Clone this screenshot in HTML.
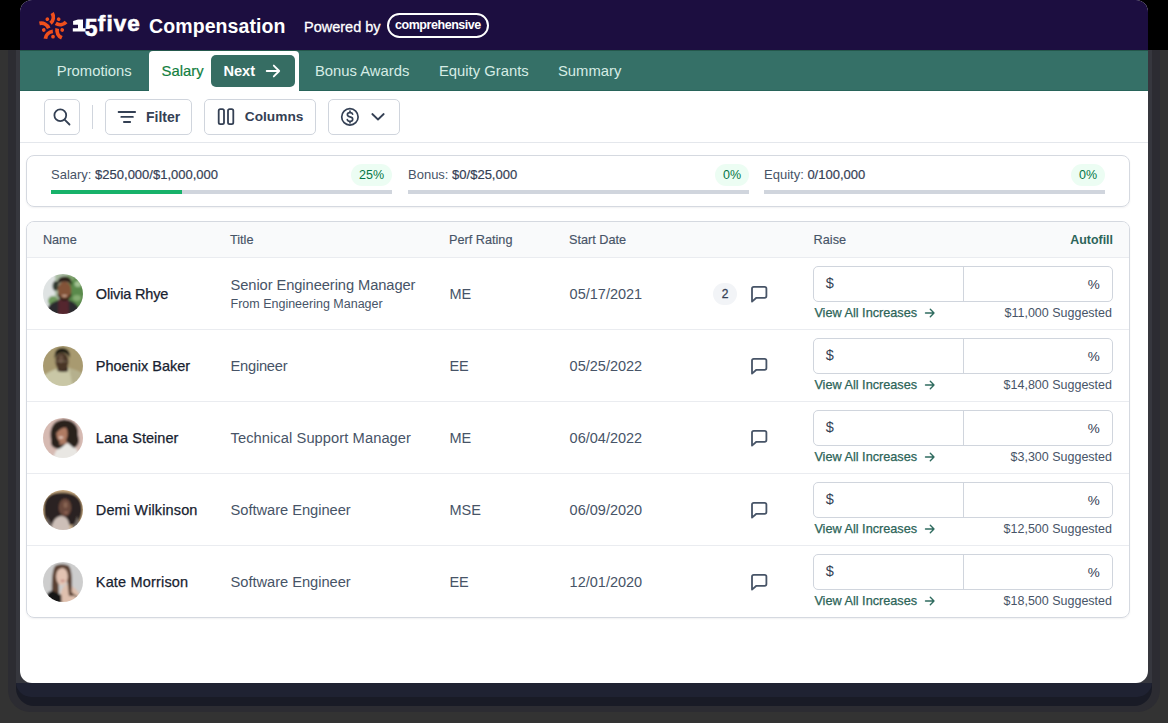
<!DOCTYPE html><html><head><meta charset="utf-8"><style>
*{margin:0;padding:0;box-sizing:border-box}
html,body{width:1168px;height:723px;overflow:hidden;background:#000}
body{position:relative;font-family:"Liberation Sans",sans-serif}
.t{position:absolute;line-height:1;white-space:nowrap}
.abs{position:absolute}
#noise{position:absolute;left:0;top:50px;width:1168px;height:673px;background:#333333}
#sh1{position:absolute;left:8px;top:50px;width:1152px;height:662px;background:#2c2c32;border-radius:0 0 22px 22px}
#sh2{position:absolute;left:16px;top:50px;width:1136px;height:656px;background:#191b26;border-radius:0 0 18px 18px}
#sh3{position:absolute;left:16px;top:50px;width:1136px;height:647px;background:#1f2232;border-radius:0 0 15px 15px}
#sh4{position:absolute;left:16px;top:50px;width:1136px;height:633px;background:#36373e}
#card{position:absolute;left:20px;top:0;width:1128px;height:683px;background:#fff;border-radius:12px;overflow:hidden}
#hdr{position:absolute;left:0;top:0;width:1128px;height:50px;background:#1c0e40}
#tabs{position:absolute;left:0;top:50px;width:1128px;height:41px;background:#357067;border-top:1px solid #24584c;border-bottom:1px solid #28645a}
.tab{color:#d6ece5}
#active{position:absolute;left:129px;top:51px;width:150px;height:40px;background:#fff;border-radius:4px 4px 0 0}
#next{position:absolute;left:191px;top:55px;width:84px;height:32px;background:#366d63;border-radius:5px}
.btn{position:absolute;top:99px;height:36px;border:1px solid #d0d5dd;border-radius:5px;background:#fff}
.bt{color:#344054;font-weight:700}
#tbar{position:absolute;left:0;top:142px;width:1128px;height:1px;background:#e4e7ec}
.sumcard{position:absolute;left:6px;top:155px;width:1104px;height:52px;border:1px solid #d5d9e0;border-radius:8px;box-shadow:0 1px 2px rgba(16,24,40,.06)}
.lbl{color:#475467}
.val{color:#344054;-webkit-text-stroke:0.2px #344054}
.bar{position:absolute;top:190px;height:4px;background:#d0d5dd}
.fill{position:absolute;left:0;top:0;height:4px;background:#17b26a}
.pct{position:absolute;top:164px;height:22px;border-radius:11px;background:#ecfdf3}
.pt{color:#067647}
#tbl{position:absolute;left:6px;top:221px;width:1104px;height:397px;border:1px solid #d5d9e0;border-radius:8px;box-shadow:0 1px 2px rgba(16,24,40,.06);overflow:hidden}
#thead{position:absolute;left:0;top:0;width:1102px;height:36px;background:#f9fafb;border-bottom:1px solid #eaecf0}
.sep{position:absolute;left:7px;width:1102px;height:1px;background:#eaecf0}
.th{color:#475467;-webkit-text-stroke:0.15px #475467}
.nm{color:#182230;-webkit-text-stroke:0.25px #182230}
.ti{color:#475467}
.av{position:absolute;left:23px;width:40px;height:40px;border-radius:50%;overflow:hidden}
.av svg{display:block}
.cm{position:absolute;left:729px}
.bdg{position:absolute;left:693px;width:24px;height:22px;border-radius:11px;background:#f2f4f7}
.inp{position:absolute;left:793px;width:300px;height:36px;border:1px solid #d0d5dd;border-radius:5px}
.isep{position:absolute;left:149px;top:0;width:1px;height:34px;background:#d0d5dd}
.it{color:#344054}
.via{color:#2c6458;-webkit-text-stroke:0.25px #2c6458}
.sug{color:#475467}
</style></head><body>
<div id="noise"></div><div id="sh1"></div><div id="sh2"></div><div id="sh3"></div><div id="sh4"></div>
<svg width="0" height="0" style="position:absolute"><defs><filter id="bl" x="-10%" y="-10%" width="120%" height="120%"><feGaussianBlur stdDeviation="0.85"/></filter></defs></svg>
<div id="card">
<div id="hdr"></div><div id="tabs"></div>
<svg class="abs" style="left:19.1px;top:12.6px;overflow:visible" width="28" height="28" viewBox="-14 -14 28 28">
<defs><path id="arc" d="M-0.8 -14 A8.2 8.2 0 0 1 -2.5 -3.7" fill="none" stroke="#f04f1c" stroke-width="3.8"/></defs>
<use href="#arc"/><use href="#arc" transform="rotate(72)"/><use href="#arc" transform="rotate(144)"/><use href="#arc" transform="rotate(216)"/><use href="#arc" transform="rotate(288)"/>
<g fill="#f04f1c"><circle cx="0" cy="-9.7" r="1.85" transform="rotate(36)"/><circle cx="0" cy="-9.7" r="1.85" transform="rotate(108)"/><circle cx="0" cy="-9.7" r="1.85" transform="rotate(180)"/><circle cx="0" cy="-9.7" r="1.85" transform="rotate(252)"/><circle cx="0" cy="-9.7" r="1.85" transform="rotate(324)"/></g></svg>
<svg class="abs" style="left:0;top:0" width="70" height="40"><path d="M53.1 21.1 L58 19.4 H63 V28.3 H65.5 V31.6 H52.8 V28.3 H58 V24.7 H53.1 Z" fill="#fff"/></svg>
<div class="t " style="left:64.8px;top:16.93px;font-size:23px;color:#fff;font-weight:700;-webkit-text-stroke:0.5px #fff">5</div>
<div class="t " style="left:77.8px;top:13.25px;font-size:22.5px;color:#fff;font-weight:700;letter-spacing:1.1px;-webkit-text-stroke:0.6px #fff">f<span>ive</span></div>
<div class="t " style="left:129px;top:16.69px;font-size:19.5px;color:#fff;font-weight:700;letter-spacing:0.1px">Compensation</div>
<div class="t " style="left:284px;top:19.83px;font-size:14.5px;color:#fff;-webkit-text-stroke:0.3px #fff">Powered by</div>
<div class="abs" style="left:367px;top:13px;width:102px;height:25px;border:2px solid #fff;border-radius:13px"></div>
<div class="t " style="left:375px;top:19.22px;font-size:12.5px;color:#fff;font-weight:700;letter-spacing:-0.45px">comprehensive</div>
<div class="t tab" style="left:36.8px;top:64.47px;font-size:14.8px;">Promotions</div>
<div id="active"></div><div id="next"></div>
<div class="t " style="left:141.6px;top:64.47px;font-size:14.8px;color:#13803f;-webkit-text-stroke:0.2px #13803f">Salary</div>
<div class="t " style="left:203.4px;top:63.64px;font-size:14.6px;color:#fff;font-weight:700">Next</div>
<svg class="abs" style="left:244px;top:63px" width="18" height="16" viewBox="0 0 18 16"><path d="M2.7 8 H15.2 M9.8 2.6 L15.2 8 L9.8 13.4" fill="none" stroke="#fff" stroke-width="1.85" stroke-linecap="round" stroke-linejoin="round"/></svg>
<div class="t tab" style="left:295px;top:64.47px;font-size:14.8px;">Bonus Awards</div>
<div class="t tab" style="left:419px;top:64.47px;font-size:14.8px;">Equity Grants</div>
<div class="t tab" style="left:538px;top:64.47px;font-size:14.8px;">Summary</div>
<div class="btn" style="left:24px;width:36px"></div>
<svg class="abs" style="left:30px;top:105px" width="24" height="24" viewBox="0 0 24 24"><circle cx="10.3" cy="10.3" r="5.9" fill="none" stroke="#344054" stroke-width="1.8"/><path d="M14.6 14.6 L19.5 19.5" stroke="#344054" stroke-width="1.8" stroke-linecap="round"/></svg>
<div class="abs" style="left:72px;top:105px;width:1px;height:24px;background:#d0d5dd"></div>
<div class="btn" style="left:85px;width:87px"></div>
<svg class="abs" style="left:96px;top:105px" width="20" height="20" viewBox="0 0 20 20"><path d="M2.6 7 H19.2 M5.3 11.9 H16.9 M7.9 17 H14.2" stroke="#344054" stroke-width="1.8" stroke-linecap="round"/></svg>
<div class="t bt" style="left:126px;top:110.05px;font-size:14px;">Filter</div>
<div class="btn" style="left:184px;width:112px"></div>
<svg class="abs" style="left:196px;top:106px" width="20" height="22" viewBox="0 0 20 22"><rect x="2.7" y="3.2" width="5.3" height="15" rx="1.6" fill="none" stroke="#344054" stroke-width="1.8"/><rect x="12" y="3.2" width="5.3" height="15" rx="1.6" fill="none" stroke="#344054" stroke-width="1.8"/></svg>
<div class="t bt" style="left:224.8px;top:110.20px;font-size:13.7px;">Columns</div>
<div class="btn" style="left:308px;width:72px"></div>
<svg class="abs" style="left:318px;top:105px" width="24" height="24" viewBox="0 0 24 24"><circle cx="11.9" cy="11.9" r="8.2" fill="none" stroke="#344054" stroke-width="1.7"/><path d="M14.6 9.2 Q14.3 7.6 12 7.6 Q9.4 7.6 9.4 9.6 Q9.4 11.4 12 11.8 Q14.7 12.2 14.7 14.2 Q14.7 16.3 12 16.3 Q9.6 16.3 9.3 14.6 M12 6.1 V7.6 M12 16.3 V17.8" fill="none" stroke="#344054" stroke-width="1.7" stroke-linecap="round"/></svg>
<svg class="abs" style="left:350px;top:111px" width="16" height="12" viewBox="0 0 16 12"><path d="M2.3 3 L8 8.5 L13.7 3" fill="none" stroke="#344054" stroke-width="1.8" stroke-linecap="round" stroke-linejoin="round"/></svg>
<div id="tbar"></div>
<div class="sumcard"></div>
<div class="t " style="left:31px;top:168.00px;font-size:13px;"><span class="lbl">Salary:</span> <span class="val">$250,000/$1,000,000</span></div>
<div class="bar" style="left:31px;width:341px"><div class="fill" style="width:131px"></div></div>
<div class="pct" style="left:331px;width:41px"></div>
<div class="t pt" style="left:331px;top:169.32px;font-size:12.5px;width:41px;text-align:center">25%</div>
<div class="t " style="left:388px;top:168.00px;font-size:13px;"><span class="lbl">Bonus:</span> <span class="val">$0/$25,000</span></div>
<div class="bar" style="left:388px;width:341px"><div class="fill" style="width:0px"></div></div>
<div class="pct" style="left:695px;width:34px"></div>
<div class="t pt" style="left:695px;top:169.32px;font-size:12.5px;width:34px;text-align:center">0%</div>
<div class="t " style="left:744px;top:168.00px;font-size:13px;"><span class="lbl">Equity:</span> <span class="val">0/100,000</span></div>
<div class="bar" style="left:744px;width:341px"><div class="fill" style="width:0px"></div></div>
<div class="pct" style="left:1051px;width:34px"></div>
<div class="t pt" style="left:1051px;top:169.32px;font-size:12.5px;width:34px;text-align:center">0%</div>
<div id="tbl"><div id="thead"></div></div>
<div class="t th" style="left:22.9px;top:234.15px;font-size:12.7px;">Name</div>
<div class="t th" style="left:210px;top:234.15px;font-size:12.7px;">Title</div>
<div class="t th" style="left:429px;top:234.15px;font-size:12.7px;">Perf Rating</div>
<div class="t th" style="left:549px;top:234.15px;font-size:12.7px;">Start Date</div>
<div class="t th" style="left:793.6px;top:234.15px;font-size:12.7px;">Raise</div>
<div class="t " style="right:35px;top:233.60px;font-size:12.4px;color:#2c6459;font-weight:700">Autofill</div>
<div class="av" style="top:274px"><svg width="40" height="40" viewBox="0 0 40 40"><g filter="url(#bl)"><rect x="-2" y="-2" width="44" height="44" fill="#a9bca2"/>
   <rect x="-2" y="-2" width="14" height="44" fill="#dfe3e3"/>
   <ellipse cx="33" cy="18" rx="9" ry="17" fill="#5a8a4b"/><ellipse cx="35" cy="10" rx="3.5" ry="3" fill="#a3c393"/><ellipse cx="34" cy="24" rx="4" ry="3" fill="#86ad72"/>
   <ellipse cx="10" cy="27" rx="5" ry="5" fill="#6e9a5b"/><ellipse cx="12.5" cy="12" rx="3" ry="5" fill="#323a31"/><ellipse cx="27" cy="4" rx="5" ry="3" fill="#7ea26c"/>
   <path d="M2 42 Q4 29 14 26.5 L27 26.5 Q36 29 38 42Z" fill="#2a2a2e"/>
   <path d="M15.5 25 L25.5 25 L26 42 L15 42Z" fill="#55272d"/>
   <ellipse cx="21.5" cy="16.5" rx="6.8" ry="9.3" fill="#835339"/>
   <path d="M14 12 Q13.5 2.5 21.5 2.5 Q29.5 2.5 29 12 Q27 7.5 21.5 7.5 Q16 7.5 14 12Z" fill="#2b1e18"/>
   <path d="M14.7 19 Q21.5 30 28.3 19 L28.3 22 Q21.5 32 14.7 22Z" fill="#2e1f19"/>
   <ellipse cx="21.5" cy="21.8" rx="2.6" ry="1" fill="#c9a793"/></g></svg></div>
<div class="t nm" style="left:75.8px;top:286.83px;font-size:14.5px;letter-spacing:-0.15px">Olivia Rhye</div>
<div class="t ti" style="left:210.5px;top:277.56px;font-size:14.7px;letter-spacing:-0.08px">Senior Engineering Manager</div>
<div class="t ti" style="left:210.5px;top:298.42px;font-size:12.5px;">From Engineering Manager</div>
<div class="t ti" style="left:429.4px;top:287.33px;font-size:14.5px;">ME</div>
<div class="t ti" style="left:549.6px;top:287.33px;font-size:14.5px;">05/17/2021</div>
<div class="bdg" style="top:283px"></div>
<div class="t it" style="left:693px;top:288.34px;font-size:12px;width:24px;text-align:center;-webkit-text-stroke:0.3px #344054">2</div>
<svg class="cm" style="top:284px" width="20" height="20" viewBox="0 0 20 20"><path d="M3 17.6 V4.6 Q3 2.8 4.8 2.8 H15.6 Q17.4 2.8 17.4 4.6 V12 Q17.4 13.8 15.6 13.8 H7.4 Z" fill="none" stroke="#475467" stroke-width="1.8" stroke-linejoin="round"/></svg>
<div class="inp" style="top:266px"><div class="isep"></div></div>
<div class="t it" style="left:805.8px;top:276.43px;font-size:14.5px;">$</div>
<div class="t it" style="right:48.299999999999955px;top:277.77px;font-size:13.5px;">%</div>
<div class="t via" style="left:794.4px;top:306.55px;font-size:12.7px;">View All Increases</div>
<svg class="abs" style="left:904px;top:307px" width="12" height="12" viewBox="0 0 12 12"><path d="M1.5 6 H10 M6.3 2.3 L10 6 L6.3 9.7" fill="none" stroke="#2f6b5f" stroke-width="1.4" stroke-linecap="round" stroke-linejoin="round"/></svg>
<div class="t sug" style="right:36px;top:306.72px;font-size:12.5px;">$11,000 Suggested</div>
<div class="sep" style="top:329px"></div>
<div class="av" style="top:346px"><svg width="40" height="40" viewBox="0 0 40 40"><g filter="url(#bl)"><rect x="-2" y="-2" width="44" height="44" fill="#a89a70"/>
   <path d="M-2 42 L0 30 Q8 24 15 22.5 L26 22 Q33 24 40 28 L42 42Z" fill="#c9c7a6"/>
   <path d="M26 22 Q33 24 40 28 L42 42 L30 42Z" fill="#b5b08d"/>
   <path d="M14.5 21 L25 21 L25 25.3 Q20 27 14.5 25Z" fill="#3a2a20"/>
   <ellipse cx="19" cy="15.5" rx="6.6" ry="8.7" fill="#4a3528"/>
   <ellipse cx="18" cy="13" rx="2.5" ry="4" fill="#6a5243"/>
   <path d="M11.5 13 Q11 2 19 2 Q27.5 2 27 12 Q24 6.5 19 6.5 Q14 6.5 11.5 13Z" fill="#161210"/>
   <path d="M11 15.3 H24" stroke="#8f8670" stroke-width="0.6"/></g></svg></div>
<div class="t nm" style="left:75.8px;top:358.83px;font-size:14.5px;letter-spacing:0px">Phoenix Baker</div>
<div class="t ti" style="left:210.5px;top:359.16px;font-size:14.7px;letter-spacing:-0.25px">Engineer</div>
<div class="t ti" style="left:429.4px;top:359.33px;font-size:14.5px;">EE</div>
<div class="t ti" style="left:549.6px;top:359.33px;font-size:14.5px;">05/25/2022</div>
<svg class="cm" style="top:356px" width="20" height="20" viewBox="0 0 20 20"><path d="M3 17.6 V4.6 Q3 2.8 4.8 2.8 H15.6 Q17.4 2.8 17.4 4.6 V12 Q17.4 13.8 15.6 13.8 H7.4 Z" fill="none" stroke="#475467" stroke-width="1.8" stroke-linejoin="round"/></svg>
<div class="inp" style="top:338px"><div class="isep"></div></div>
<div class="t it" style="left:805.8px;top:348.43px;font-size:14.5px;">$</div>
<div class="t it" style="right:48.299999999999955px;top:349.77px;font-size:13.5px;">%</div>
<div class="t via" style="left:794.4px;top:378.55px;font-size:12.7px;">View All Increases</div>
<svg class="abs" style="left:904px;top:379px" width="12" height="12" viewBox="0 0 12 12"><path d="M1.5 6 H10 M6.3 2.3 L10 6 L6.3 9.7" fill="none" stroke="#2f6b5f" stroke-width="1.4" stroke-linecap="round" stroke-linejoin="round"/></svg>
<div class="t sug" style="right:36px;top:378.72px;font-size:12.5px;">$14,800 Suggested</div>
<div class="sep" style="top:401px"></div>
<div class="av" style="top:418px"><svg width="40" height="40" viewBox="0 0 40 40"><g filter="url(#bl)"><rect x="-2" y="-2" width="44" height="44" fill="#d6bab2"/>
   <path d="M10 42 Q12 28 24 25.5 Q34 25 37 42Z" fill="#e9e7e3"/>
   <path d="M8 22 Q5 3 21 1.5 Q36 2.5 35 17 Q38 27 31 30 Q26 26 24 24 Q19 30 15 31 Q7 30 8 22Z" fill="#2b201b"/>
   <path d="M16.5 22 L23.5 22 L23.5 26 L16.5 27Z" fill="#a87660"/>
   <ellipse cx="19" cy="15.5" rx="5.6" ry="8.8" fill="#b07c64"/>
   <path d="M12.5 11 Q16 4 26 7 L26 10 Q19 8 13.5 15Z" fill="#2b201b"/>
   <ellipse cx="18" cy="19.5" rx="2.3" ry="0.9" fill="#ecd7cc"/></g></svg></div>
<div class="t nm" style="left:75.8px;top:430.83px;font-size:14.5px;letter-spacing:0.03px">Lana Steiner</div>
<div class="t ti" style="left:210.5px;top:431.16px;font-size:14.7px;letter-spacing:0.07px">Technical Support Manager</div>
<div class="t ti" style="left:429.4px;top:431.33px;font-size:14.5px;">ME</div>
<div class="t ti" style="left:549.6px;top:431.33px;font-size:14.5px;">06/04/2022</div>
<svg class="cm" style="top:428px" width="20" height="20" viewBox="0 0 20 20"><path d="M3 17.6 V4.6 Q3 2.8 4.8 2.8 H15.6 Q17.4 2.8 17.4 4.6 V12 Q17.4 13.8 15.6 13.8 H7.4 Z" fill="none" stroke="#475467" stroke-width="1.8" stroke-linejoin="round"/></svg>
<div class="inp" style="top:410px"><div class="isep"></div></div>
<div class="t it" style="left:805.8px;top:420.43px;font-size:14.5px;">$</div>
<div class="t it" style="right:48.299999999999955px;top:421.77px;font-size:13.5px;">%</div>
<div class="t via" style="left:794.4px;top:450.55px;font-size:12.7px;">View All Increases</div>
<svg class="abs" style="left:904px;top:451px" width="12" height="12" viewBox="0 0 12 12"><path d="M1.5 6 H10 M6.3 2.3 L10 6 L6.3 9.7" fill="none" stroke="#2f6b5f" stroke-width="1.4" stroke-linecap="round" stroke-linejoin="round"/></svg>
<div class="t sug" style="right:36px;top:450.72px;font-size:12.5px;">$3,300 Suggested</div>
<div class="sep" style="top:473px"></div>
<div class="av" style="top:490px"><svg width="40" height="40" viewBox="0 0 40 40"><g filter="url(#bl)"><rect x="-2" y="-2" width="44" height="44" fill="#c9ab83"/>
   <path d="M1 20 Q0 2 20 2.5 Q40 3 39 21 Q38 31 33 35 L6 35 Q1 30 1 20Z" fill="#2c2320"/>
   <path d="M4 26 Q6 33 12 36 L10 42 L2 42Z" fill="#6d6560"/>
   <path d="M34 26 Q33 34 29 36 L31 42 L40 42Z" fill="#766e69"/>
   <path d="M8 42 Q9 27 18 26 Q27 26 27 42Z" fill="#cdbfb8"/>
   <ellipse cx="22" cy="17.5" rx="6.2" ry="9" fill="#6b4a3c"/>
   <ellipse cx="22.5" cy="15" rx="2" ry="3" fill="#8a6654"/>
   <ellipse cx="23" cy="22.5" rx="1.8" ry="0.9" fill="#9c6e5e"/></g></svg></div>
<div class="t nm" style="left:75.8px;top:502.83px;font-size:14.5px;letter-spacing:0.13px">Demi Wilkinson</div>
<div class="t ti" style="left:210.5px;top:503.16px;font-size:14.7px;letter-spacing:-0.04px">Software Engineer</div>
<div class="t ti" style="left:429.4px;top:503.33px;font-size:14.5px;">MSE</div>
<div class="t ti" style="left:549.6px;top:503.33px;font-size:14.5px;">06/09/2020</div>
<svg class="cm" style="top:500px" width="20" height="20" viewBox="0 0 20 20"><path d="M3 17.6 V4.6 Q3 2.8 4.8 2.8 H15.6 Q17.4 2.8 17.4 4.6 V12 Q17.4 13.8 15.6 13.8 H7.4 Z" fill="none" stroke="#475467" stroke-width="1.8" stroke-linejoin="round"/></svg>
<div class="inp" style="top:482px"><div class="isep"></div></div>
<div class="t it" style="left:805.8px;top:492.43px;font-size:14.5px;">$</div>
<div class="t it" style="right:48.299999999999955px;top:493.77px;font-size:13.5px;">%</div>
<div class="t via" style="left:794.4px;top:522.55px;font-size:12.7px;">View All Increases</div>
<svg class="abs" style="left:904px;top:523px" width="12" height="12" viewBox="0 0 12 12"><path d="M1.5 6 H10 M6.3 2.3 L10 6 L6.3 9.7" fill="none" stroke="#2f6b5f" stroke-width="1.4" stroke-linecap="round" stroke-linejoin="round"/></svg>
<div class="t sug" style="right:36px;top:522.72px;font-size:12.5px;">$12,500 Suggested</div>
<div class="sep" style="top:545px"></div>
<div class="av" style="top:562px"><svg width="40" height="40" viewBox="0 0 40 40"><g filter="url(#bl)"><rect x="-2" y="-2" width="44" height="44" fill="#cdcdcd"/>
   <path d="M16 42 Q17 25 24 22 Q33 25 37 33 L40 42Z" fill="#dfc0ae"/>
   <path d="M9 35 Q8 8 12.5 3.5 Q19 1 25.5 3.5 Q30 8 28.5 30 L33 34 L26 34 L24.5 20 L15.5 20 L16 36Z" fill="#5a4030"/>
   <path d="M1 42 Q2 31 9 28.5 L18.3 33 L18.5 42Z" fill="#151515"/>
   <ellipse cx="19" cy="14.5" rx="5.9" ry="8.8" fill="#e3c3b2"/>
   <ellipse cx="19.7" cy="18.8" rx="2.2" ry="1" fill="#c0807a"/>
   <path d="M12.5 11 Q18 3 25.5 8 L25.5 5 Q18 0 12.5 5Z" fill="#5a4030"/>
   <path d="M33 33 L34.5 42" stroke="#222" stroke-width="0.8"/></g></svg></div>
<div class="t nm" style="left:75.8px;top:574.83px;font-size:14.5px;letter-spacing:0.17px">Kate Morrison</div>
<div class="t ti" style="left:210.5px;top:575.16px;font-size:14.7px;letter-spacing:-0.04px">Software Engineer</div>
<div class="t ti" style="left:429.4px;top:575.33px;font-size:14.5px;">EE</div>
<div class="t ti" style="left:549.6px;top:575.33px;font-size:14.5px;">12/01/2020</div>
<svg class="cm" style="top:572px" width="20" height="20" viewBox="0 0 20 20"><path d="M3 17.6 V4.6 Q3 2.8 4.8 2.8 H15.6 Q17.4 2.8 17.4 4.6 V12 Q17.4 13.8 15.6 13.8 H7.4 Z" fill="none" stroke="#475467" stroke-width="1.8" stroke-linejoin="round"/></svg>
<div class="inp" style="top:554px"><div class="isep"></div></div>
<div class="t it" style="left:805.8px;top:564.43px;font-size:14.5px;">$</div>
<div class="t it" style="right:48.299999999999955px;top:565.77px;font-size:13.5px;">%</div>
<div class="t via" style="left:794.4px;top:594.55px;font-size:12.7px;">View All Increases</div>
<svg class="abs" style="left:904px;top:595px" width="12" height="12" viewBox="0 0 12 12"><path d="M1.5 6 H10 M6.3 2.3 L10 6 L6.3 9.7" fill="none" stroke="#2f6b5f" stroke-width="1.4" stroke-linecap="round" stroke-linejoin="round"/></svg>
<div class="t sug" style="right:36px;top:594.72px;font-size:12.5px;">$18,500 Suggested</div>
</div></body></html>
